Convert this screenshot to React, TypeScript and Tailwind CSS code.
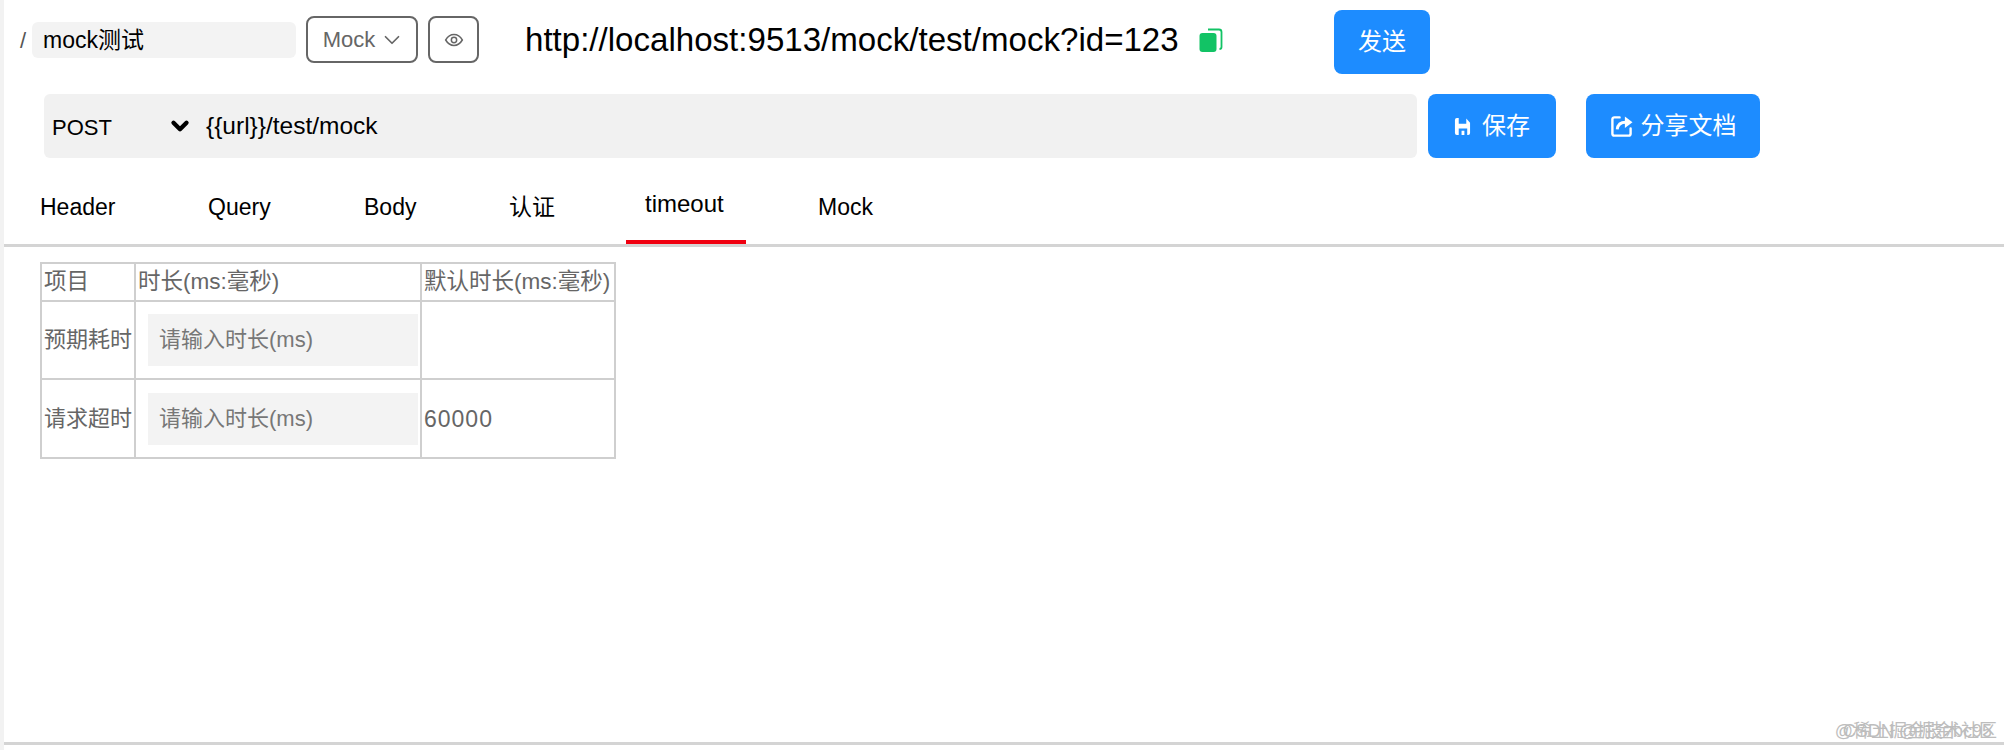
import { ChevronDown } from 'lucide-react'

const FONT = "font-['Liberation_Sans','Noto_Sans_CJK_SC',sans-serif]"

const TABS = [
  { name: 'Header', className: 'w-[204px] pl-[36px]' },
  { name: 'Query', className: 'w-[156px]' },
  { name: 'Body', className: 'w-[145px]' },
  { name: '认证', className: 'w-[117px]' },
  { name: 'timeout', className: 'w-[192px]', active: true },
  { name: 'Mock', className: '' },
]

function EyeIcon() {
  return (
    <svg viewBox="0 0 24 24" className="w-[20px] h-[20px] text-[#666]" fill="none" stroke="currentColor" strokeWidth="1.8">
      <path d="M2 12c2.6-4.4 6-6.5 10-6.5s7.4 2.100 10 6.500c-2.600 4.400-6 6.500-10 6.500S4.600 16.400 2 12z" />
      <circle cx="12" cy="12" r="3.200" />
    </svg>
  )
}

function CopyIcon() {
  return (
    <svg viewBox="0 0 24 24" className="w-[24px] h-[24px] ml-[20px]">
      <path d="M9 1.500h11a2.500 2.500 0 0 1 2.500 2.500v15a2 2 0 0 1-2 2" fill="none" stroke="#12c365" strokeWidth="1.800" />
      <rect x="0.500" y="5" width="17" height="19" rx="3" fill="#12c365" />
    </svg>
  )
}

function SaveIcon() {
  return (
    <svg viewBox="0 0 18 20" className="w-[17px] h-[19px]" fill="#fff">
      <path d="M3 1h2v6h8V1.500L17 6v11a2 2 0 0 1-2 2h-1v-7H5v7H3a2 2 0 0 1-2-2V3a2 2 0 0 1 2-2z" />
      <rect x="8" y="14.500" width="3" height="4.500" />
    </svg>
  )
}

function ShareIcon() {
  return (
    <svg viewBox="0 0 24 24" className="w-[23px] h-[23px]" fill="none" stroke="#fff" strokeWidth="2.500">
      <path d="M10 2.500H4.500a2 2 0 0 0-2 2v15a2 2 0 0 0 2 2h15a2 2 0 0 0 2-2V14" strokeLinecap="round" />
      <path d="M7.500 15c.5-4.500 3.500-7.500 9-7.500" strokeWidth="3" />
      <path d="M15.500 1.500l8 6-8 6z" fill="#fff" stroke="none" />
    </svg>
  )
}

function DurationInput() {
  return (
    <input
      placeholder="请输入时长(ms)"
      className="w-[270px] h-[52px] ml-[12px] pl-[11px] bg-[#f3f3f3] text-[22px] outline-none placeholder:text-[#777]"
    />
  )
}

export default function App() {
  return (
    <div className={`relative h-[750px] bg-white border-l-[4px] border-[#f2f2f2] text-black overflow-hidden ${FONT}`}>
      <div className="flex items-start pt-[10px] h-[84px]">
        <span className="ml-[16px] w-[12px] mt-[17px] text-[22px] leading-[28px] text-[#555]">/</span>
        <div className="w-[264px] h-[36px] mt-[12px] pl-[11px] rounded-[6px] bg-[#f3f3f3] text-[23px] leading-[36px]">
          mock测试
        </div>
        <button className="flex items-center justify-center gap-[4px] w-[112px] h-[47px] mt-[6px] ml-[10px] pl-[4px] rounded-[8px] border-2 border-[#666] text-[22px] text-[#666]">
          Mock
          <ChevronDown className="w-[26px] h-[26px]" strokeWidth={1.6} />
        </button>
        <button className="flex items-center justify-center w-[51px] h-[47px] mt-[6px] ml-[10px] rounded-[8px] border-2 border-[#666]">
          <EyeIcon />
        </button>
        <div className="flex items-center h-[60px] ml-[46px] w-[809px]">
          <span className="text-[33.100px] leading-none">http://localhost:9513/mock/test/mock?id=123</span>
          <CopyIcon />
        </div>
        <button className="w-[96px] h-[64px] rounded-[8px] bg-[#1d8cff] text-white text-[24px]">发送</button>
      </div>

      <div className="flex mt-[10px] ml-[40px] h-[64px]">
        <div className="flex items-center w-[1373px] rounded-[6px] bg-[#f1f1f1]">
          <span className="w-[123px] pl-[8px] pt-[2px] text-[22px]">POST</span>
          <ChevronDown className="w-[26px] h-[26px]" strokeWidth={4} />
          <span className="ml-[13px] text-[24.500px]">{'{{url}}/test/mock'}</span>
        </div>
        <button className="flex items-center justify-center gap-[11px] w-[128px] ml-[11px] rounded-[8px] bg-[#1d8cff] text-white text-[24px]">
          <SaveIcon />
          保存
        </button>
        <button className="flex items-center justify-center gap-[8px] w-[174px] ml-[30px] rounded-[8px] bg-[#1d8cff] text-white text-[24px]">
          <ShareIcon />
          分享文档
        </button>
      </div>

      <div className="flex mt-[22px] h-[67px] border-b-[3px] border-[#d4d4d4]">
        {TABS.map((tab) => (
          <div key={tab.name} className={`relative text-[23px] leading-[54px] ${tab.className}`}>
            {tab.active ? (
              <>
                <span className="relative top-[-3px] pl-[19px] text-[24px]">{tab.name}</span>
                <span className="absolute left-0 bottom-0 w-[120px] h-[4px] bg-[#f00010]" />
              </>
            ) : (
              tab.name
            )}
          </div>
        ))}
      </div>

      <table className="mt-[15px] ml-[36px] border-collapse border-2 border-[#cfcfcf] text-[22.500px] text-[#666] leading-[28px] whitespace-nowrap">
        <tbody>
          <tr className="h-[38px]">
            <td className="w-[94px] border-2 border-[#cfcfcf] pl-[2px]">项目</td>
            <td className="w-[286px] border-2 border-[#cfcfcf] px-[2px]">时长(ms:毫秒)</td>
            <td className="w-[194px] border-2 border-[#cfcfcf] px-[2px]">默认时长(ms:毫秒)</td>
          </tr>
          <tr className="h-[78px]">
            <td className="border-2 border-[#cfcfcf] pl-[2px] text-[22px]">预期耗时</td>
            <td className="border-2 border-[#cfcfcf] p-0"><DurationInput /></td>
            <td className="border-2 border-[#cfcfcf] px-[2px]"></td>
          </tr>
          <tr className="h-[79px]">
            <td className="border-2 border-[#cfcfcf] pl-[2px] text-[22px]">请求超时</td>
            <td className="border-2 border-[#cfcfcf] p-0"><DurationInput /></td>
            <td className="border-2 border-[#cfcfcf] px-[2px] text-[23px] tracking-[1px]">60000</td>
          </tr>
        </tbody>
      </table>

      {/* bottom rule and the overlapping image watermarks */}
      <div className="absolute left-0 right-0 top-[742px] h-[3px] bg-[#d4d4d4]" />
      <span className="absolute right-[7px] top-[720px] text-[18px] leading-[22px] text-[#bdbdbd]">@稀土掘金技术社区</span>
      <span className="absolute right-[12px] top-[720px] text-[18px] leading-[22px] text-[#bdbdbd]">CSDN @掘金bc95</span>
    </div>
  )
}
